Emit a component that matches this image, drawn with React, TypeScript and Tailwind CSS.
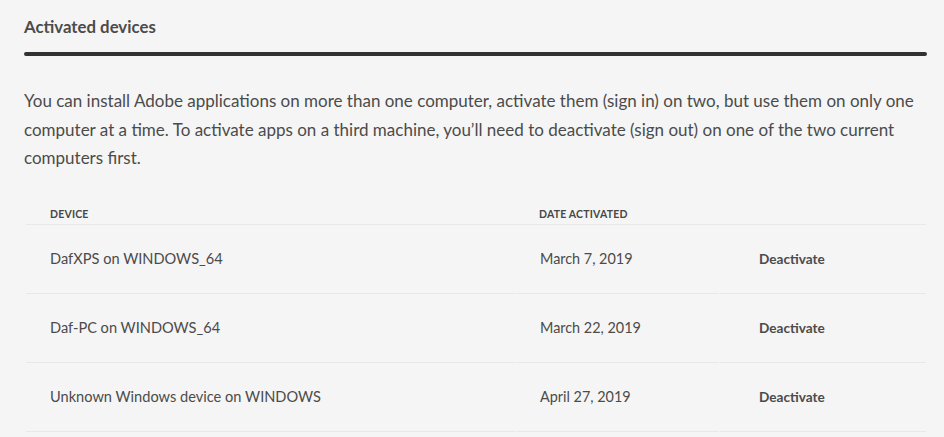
const devices = [
  { name: 'DafXPS on WINDOWS_64', date: 'March 7, 2019' },
  { name: 'Daf-PC on WINDOWS_64', date: 'March 22, 2019' },
  { name: 'Unknown Windows device on WINDOWS', date: 'April 27, 2019' },
]

export default function App() {
  return (
    <div className="min-h-[437px] w-[944px] bg-[#f5f5f5] text-[#4b4b4b]" style={{ fontFamily: "Lato, 'Noto Sans', sans-serif" }}>
      <div className="pl-6 pr-[17px] pt-[16px]">
        <h2 className="text-[16.8px] font-bold leading-[22px] text-[#4b4b4b]">Activated devices</h2>
        <div className="mt-[14px] h-[4px] rounded-full bg-[#323232]" />
        <p className="mt-[31px] text-[17px] leading-[28.5px] text-[#4b4b4b]">
          You can install Adobe applications on more than one computer, activate them (sign in) on two, but use them on only one
          computer at a time. To activate apps on a third machine, you’ll need to deactivate (sign out) on one of the two current
          computers first.
        </p>
      </div>
      <div className="ml-[26px] mr-[18px] mt-[34px]">
        <div className="grid grid-cols-[489px_204px_1fr] border-b border-[#e8e8e8]">
          <div className="px-6 pb-[2px] text-[10.5px] font-bold uppercase tracking-[0.2px] text-[#474747]">Device</div>
          <div className="px-6 pb-[2px] text-[10.5px] font-bold uppercase tracking-[0.2px] text-[#474747]">Date activated</div>
          <div />
        </div>
        {devices.map((d) => (
          <div key={d.name} className="grid h-[69px] grid-cols-[489px_204px_1fr] items-center">
            <div className="flex h-full items-center border-b border-[#e8e8e8] px-6 text-[14.6px]">{d.name}</div>
            <div className="ml-px flex h-full items-center border-b border-[#e8e8e8] px-6 text-[14.4px]">{d.date}</div>
            <div className="ml-px flex h-full items-center border-b border-[#e8e8e8] pl-[39px]">
              <button className="text-[13.6px] font-bold text-[#4b4b4b]">Deactivate</button>
            </div>
          </div>
        ))}
      </div>
    </div>
  )
}
